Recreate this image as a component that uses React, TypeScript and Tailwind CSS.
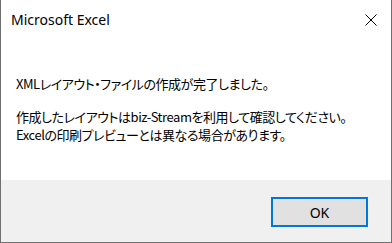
export default function App() {
  return (
    <div className="w-[392px] h-[243px] flex flex-col bg-white border-x border-b border-[#707070] overflow-hidden">
      <div className="h-[39px] flex items-center justify-between pl-[10px] pr-[14px] shrink-0">
        <span className="font-['Noto_Sans',sans-serif] text-[14px] text-black leading-none">Microsoft Excel</span>
        <svg width="12" height="12" viewBox="0 0 12 12" className="block">
          <path d="M0.5 0.5 L11.5 11.5 M11.5 0.5 L0.5 11.5" stroke="#000" strokeWidth="1" fill="none" />
        </svg>
      </div>
      <div className="flex-1 px-[15px] pt-[36px] font-['Noto_Sans_CJK_JP',sans-serif] text-[13px] tracking-[-0.45px] text-black leading-[18px] whitespace-nowrap [font-feature-settings:'palt']">
        <p>XMLレイアウト・ファイルの作成が完了しました。</p>
        <p className="mt-[15px]">作成したレイアウトはbiz-Streamを利用して確認してください。</p>
        <p>Excelの印刷プレビューとは異なる場合があります。</p>
      </div>
      <div className="h-[62px] shrink-0 bg-[#f0f0f0] flex items-start justify-end pt-[17px] pr-[23px]">
        <button className="w-[97px] h-[30px] border-2 border-[#0078d7] bg-[#e1e1e1] flex items-center justify-center font-['Noto_Sans',sans-serif] text-[14px] text-black">
          OK
        </button>
      </div>
    </div>
  );
}
